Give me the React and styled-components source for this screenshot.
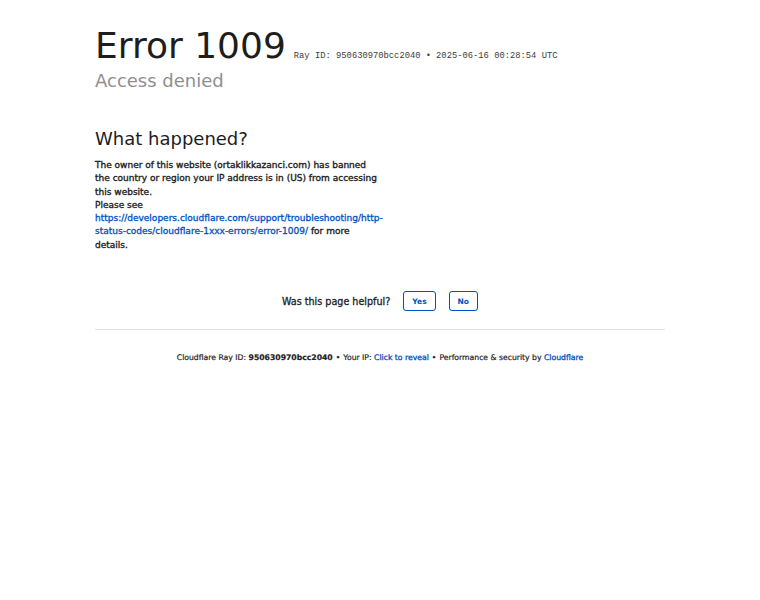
import React from "react";
import styled, { createGlobalStyle } from "styled-components";

const GlobalStyle = createGlobalStyle`
  body {
    margin: 0;
    background: #fff;
    font-family: "DejaVu Sans", sans-serif;
    color: #222;
  }
`;

function App() {
  return (
    <>
      <GlobalStyle />
      <Wrapper>
        <Header>
          <TitleRow>
            <Title>Error 1009</Title>
            <RayInfo>Ray ID: 950630970bcc2040 •</RayInfo>
            <RayInfo>2025-06-16 00:28:54 UTC</RayInfo>
          </TitleRow>
          <Subtitle>Access denied</Subtitle>
        </Header>

        <Section>
          <Column>
            <Heading>What happened?</Heading>
            <Text>
              The owner of this website (ortaklikkazanci.com) has banned the
              country or region your IP address is in (US) from accessing this
              website.
            </Text>
            <Text>
              Please see{" "}
              <Link href="#">
                https://developers.cloudflare.com/support/troubleshooting/http-status-codes/cloudflare-1xxx-errors/error-1009/
              </Link>{" "}
              for more details.
            </Text>
          </Column>
        </Section>

        <Feedback>
          <FeedbackLabel>Was this page helpful?</FeedbackLabel>
          <FeedbackButton>Yes</FeedbackButton>
          <FeedbackButton>No</FeedbackButton>
        </Feedback>

        <Footer>
          Cloudflare Ray ID: <strong>950630970bcc2040</strong>
          <Sep>•</Sep>
          Your IP: <Link href="#">Click to reveal</Link>
          <Sep>•</Sep>
          Performance &amp; security by <Link href="#">Cloudflare</Link>
        </Footer>
      </Wrapper>
    </>
  );
}

const Wrapper = styled.div`
  width: 570px;
  margin: 0 auto;
  padding-top: 26px;
`;

const Header = styled.header``;

const TitleRow = styled.div`
  display: flex;
  align-items: baseline;
  gap: 5px;
`;

const Title = styled.h1`
  margin: 0 3px 0 0;
  font-size: 36px;
  font-weight: 400;
  color: #1d1d1d;
  line-height: 40px;
`;

const RayInfo = styled.span`
  font-family: "Liberation Mono", "Courier New", monospace;
  font-size: 8.8px;
  color: #404040;
`;

const Subtitle = styled.h2`
  margin: 4px 0 0;
  font-size: 18px;
  font-weight: 400;
  color: #8f8f8f;
  line-height: 22px;
`;

const Section = styled.section`
  display: grid;
  grid-template-columns: 286px 1fr;
  margin-top: 36px;
`;

const Column = styled.div``;

const Heading = styled.h2`
  margin: 0 0 9px;
  font-size: 18px;
  font-weight: 400;
  color: #1d1d1d;
  line-height: 22px;
`;

const Text = styled.p`
  margin: 0;
  font-size: 9px;
  line-height: 13.3px;
  color: #1d1d1d;
  -webkit-text-stroke: 0.35px #1d1d1d;
`;

const Link = styled.a`
  color: #0051c3;
  text-decoration: none;
  -webkit-text-stroke: 0.3px #0051c3;
`;

const Feedback = styled.div`
  display: flex;
  align-items: center;
  justify-content: center;
  margin-top: 39px;
  gap: 13px;
`;

const FeedbackLabel = styled.span`
  font-size: 9.6px;
  color: #1d1d1d;
  -webkit-text-stroke: 0.3px #1d1d1d;
`;

const FeedbackButton = styled.button`
  font-family: "DejaVu Sans", sans-serif;
  font-size: 7.5px;
  font-weight: 700;
  color: #0051c3;
  background: #fff;
  border: 1.5px solid #0051c3;
  border-radius: 3px;
  height: 20px;
  padding: 0 8px;
  cursor: pointer;
`;

const Footer = styled.footer`
  margin-top: 18px;
  border-top: 1px solid #e2e2e5;
  padding-top: 23px;
  text-align: center;
  font-size: 7.7px;
  line-height: 10px;
  color: #1d1d1d;
  -webkit-text-stroke: 0.2px #1d1d1d;

  strong {
    font-weight: 700;
  }
`;

const Sep = styled.span`
  margin: 0 3px;
`;

export default App;
